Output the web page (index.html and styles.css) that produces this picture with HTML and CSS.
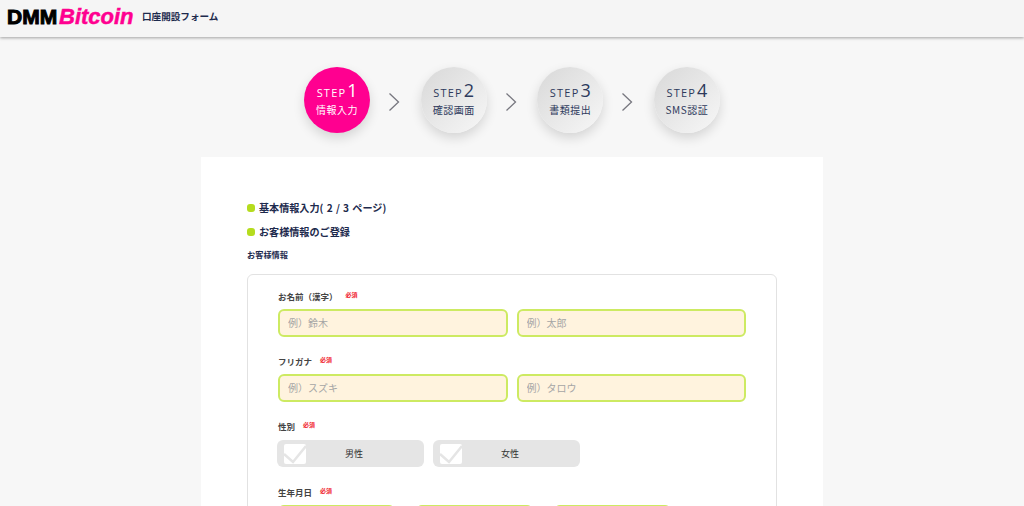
FILE: index.html
```html
<!DOCTYPE html>
<html lang="ja">
<head>
    <meta charset="UTF-8">
    <meta name="viewport" content="width=device-width, initial-scale=1.0">
    <title>口座開設フォーム</title>
    <link rel="stylesheet" href="styles.css">
</head>
<body>
    <header class="site-header">
        <div class="logo"><span class="logo-dmm">DMM</span><span class="logo-bitcoin">Bitcoin</span></div>
        <div class="header-title">口座開設フォーム</div>
    </header>

    <ol class="steps">
        <li class="step step-active">
            <div class="step-no">STEP<span>1</span></div>
            <div class="step-name">情報入力</div>
        </li>
        <li class="step-arrow"><svg width="12" height="20" viewBox="0 0 12 20"><path d="M1.5 1.5 L10.5 10 L1.5 18.5" fill="none" stroke="#77777f" stroke-width="1.3"/></svg></li>
        <li class="step">
            <div class="step-no">STEP<span>2</span></div>
            <div class="step-name">確認画面</div>
        </li>
        <li class="step-arrow"><svg width="12" height="20" viewBox="0 0 12 20"><path d="M1.5 1.5 L10.5 10 L1.5 18.5" fill="none" stroke="#77777f" stroke-width="1.3"/></svg></li>
        <li class="step">
            <div class="step-no">STEP<span>3</span></div>
            <div class="step-name">書類提出</div>
        </li>
        <li class="step-arrow"><svg width="12" height="20" viewBox="0 0 12 20"><path d="M1.5 1.5 L10.5 10 L1.5 18.5" fill="none" stroke="#77777f" stroke-width="1.3"/></svg></li>
        <li class="step">
            <div class="step-no">STEP<span>4</span></div>
            <div class="step-name">SMS認証</div>
        </li>
    </ol>

    <main class="card">
        <h2 class="bullet-title page-count">基本情報入力( 2 / 3 ページ)</h2>
        <h2 class="bullet-title">お客様情報のご登録</h2>
        <h3 class="section-label">お客様情報</h3>

        <form class="form-box">
            <div class="field field-name">
                <div class="field-label">お名前（漢字）<em class="required">必須</em></div>
                <div class="input-row">
                    <input type="text" placeholder="例）鈴木">
                    <input type="text" placeholder="例）太郎">
                </div>
            </div>
            <div class="field field-kana">
                <div class="field-label">フリガナ<em class="required">必須</em></div>
                <div class="input-row">
                    <input type="text" placeholder="例）スズキ">
                    <input type="text" placeholder="例）タロウ">
                </div>
            </div>
            <div class="field field-gender">
                <div class="field-label">性別<em class="required">必須</em></div>
                <div class="choice-row">
                    <div class="choice">
                        <svg class="check" width="22" height="20" viewBox="0 0 22 20"><rect width="22" height="20" rx="2" fill="#fff"/><path d="M0 10 L9 18 L22 2" fill="none" stroke="#e5e5e5" stroke-width="2.5"/></svg>
                        <span>男性</span>
                    </div>
                    <div class="choice">
                        <svg class="check" width="22" height="20" viewBox="0 0 22 20"><rect width="22" height="20" rx="2" fill="#fff"/><path d="M0 10 L9 18 L22 2" fill="none" stroke="#e5e5e5" stroke-width="2.5"/></svg>
                        <span>女性</span>
                    </div>
                </div>
            </div>
            <div class="field">
                <div class="field-label">生年月日<em class="required">必須</em></div>
                <div class="date-row">
                    <div class="date-box"></div>
                    <div class="date-box"></div>
                    <div class="date-box"></div>
                </div>
            </div>
        </form>
    </main>
</body>
</html>
```

FILE: styles.css
```css
html, body { height: 506px; overflow: hidden; }
body { margin: 0; background-color: #f7f7f7; color: #1d2a4d; font-family: "Noto Sans CJK JP", "Noto Sans", sans-serif; }

.site-header { display: flex; align-items: center; height: 37px; padding: 0 0 3px 7px; box-sizing: border-box; background-color: #f5f5f5; box-shadow: 0 1px 3px rgba(0,0,0,.35); }
.logo { display: flex; align-items: baseline; width: 135px; font-family: "Liberation Sans", sans-serif; font-weight: bold; line-height: 1; }
.logo-dmm { width: 52px; color: #000; font-size: 21px; -webkit-text-stroke: 1px #000; }
.logo-bitcoin { color: #ff0090; font-size: 22px; font-style: italic; -webkit-text-stroke: .5px #ff0090; }
.header-title { margin-top: -2px; font-size: 9.6px; font-weight: 700; }

.steps { display: flex; justify-content: center; align-items: center; margin: 30px 0 24px; padding: 0; list-style: none; }
.step { display: flex; flex-direction: column; align-items: center; justify-content: center; width: 66px; height: 66px; padding-bottom: 4px; box-sizing: border-box; border-radius: 50%; background: linear-gradient(135deg, #d8d8d8, #f7f7f7); box-shadow: 0 5px 12px rgba(0,0,0,.14); color: #2e3a5c; }
.step-active { background: #ff0090; color: #fff; }
.step-no { font-family: "Open Sans", sans-serif; font-size: 11px; line-height: 20px; letter-spacing: 1.2px; }
.step-no span { margin-left: 1px; font-size: 18px; letter-spacing: 0; }
.step-name { font-size: 10px; line-height: 14px; letter-spacing: .5px; }
.step-arrow { display: flex; justify-content: center; width: 50.6px; margin: 3px 1.4px 0 -1.4px; }

.card { width: 622px; height: 400px; margin: 0 auto; padding: 43px 46px 0; box-sizing: border-box; background-color: #fff; }
.bullet-title { display: flex; align-items: center; margin: 0 0 8px; font-size: 10.1px; font-weight: 700; line-height: 16px; }
.bullet-title::before { content: ""; width: 8px; height: 8px; margin-right: 4px; border-radius: 3px; background-color: #b5dc1e; }
.page-count { word-spacing: 1px; white-space: pre; }
.section-label { margin: 7px 0 14px; font-size: 8.2px; font-weight: 700; line-height: 12px; }

.form-box { height: 400px; padding: 14px 30px 0; box-sizing: border-box; border: 1px solid #e2e2e2; border-radius: 6px; }
.field-label { display: flex; align-items: flex-start; padding-top: 1px; font-size: 8.5px; font-weight: 700; line-height: 12px; color: #444; }
.required { margin-left: 8px; color: #f0222e; font-size: 6px; font-style: normal; font-weight: 700; line-height: 10px; }
.field-name, .field-kana { margin-bottom: 17.5px; }
.field-gender { margin-bottom: 18px; }

.input-row { display: flex; gap: 9px; margin-top: 7px; }
.input-row input { flex: 1; width: 0; height: 27.5px; padding: 0 8px; box-sizing: border-box; border: 2px solid #cdea62; border-radius: 6px; background-color: #fff3de; font-family: inherit; font-size: 10px; }
.input-row input::placeholder { color: #a5a5a5; }

.choice-row { display: flex; gap: 9px; margin: 8px 0 0 -1px; }
.choice { display: flex; align-items: center; width: 147px; height: 27px; padding-left: 7px; box-sizing: border-box; border-radius: 6px; background-color: #e5e5e5; font-size: 9px; color: #333; }
.choice span { flex: 1; padding-right: 22px; text-align: center; }
.check { flex: none; }

.date-row { display: flex; gap: 21px; margin-top: 7px; }
.date-box { width: 117px; height: 28px; box-sizing: border-box; border: 2px solid #cdea62; border-radius: 6px; background-color: #fff3de; }
```
